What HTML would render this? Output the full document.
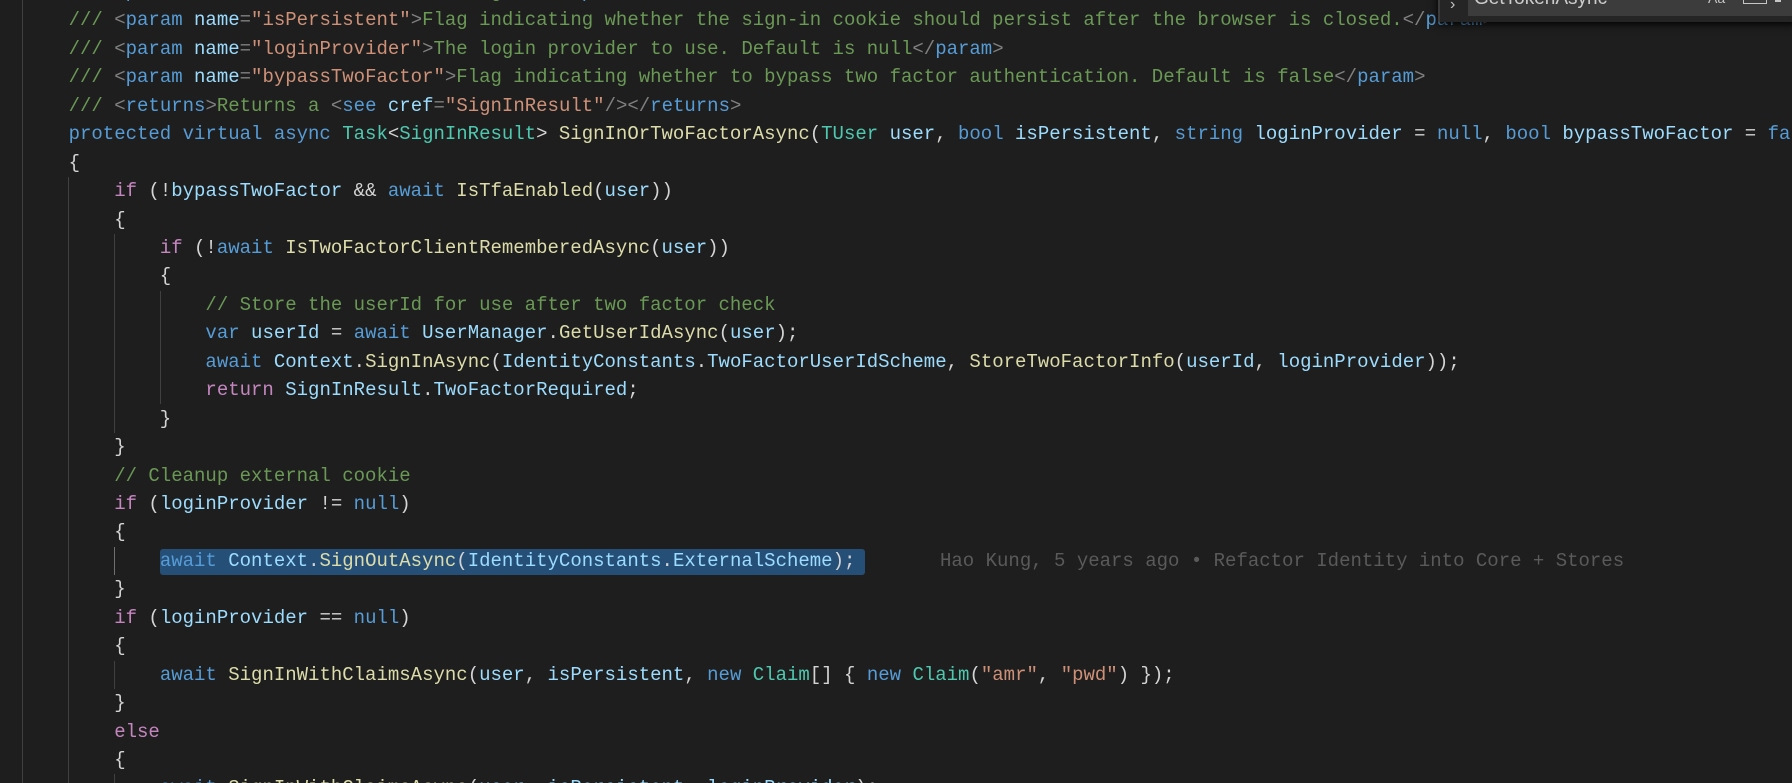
<!DOCTYPE html>
<html><head><meta charset="utf-8"><style>
html,body{margin:0;padding:0;background:#1e1e1e;width:1792px;height:783px;overflow:hidden;position:relative}
.l{position:absolute;left:68.6px;height:28.44px;line-height:28.44px;font-family:"Liberation Mono",monospace;font-size:19px;color:#d4d4d4;white-space:pre}
.c{color:#6a9955}.t{color:#808080}.k{color:#569cd6}.p{color:#c586c0}.y{color:#4ec9b0}.m{color:#dcdcaa}.v{color:#9cdcfe}.s{color:#ce9178}
.g{position:absolute;width:1px;background:#404040}
.sel{position:absolute;left:160px;top:549px;width:705px;height:26px;background:#264f78;border-radius:3px}
.bl{position:absolute;left:940px;font-family:"Liberation Mono",monospace;font-size:19px;color:#5a5a5a;white-space:pre;line-height:28.44px;height:28.44px}
</style></head><body>
<div class="g" style="left:22px;top:0;height:783px"></div>
<div class="g" style="left:68px;top:177px;height:606px"></div>
<div class="g" style="left:114px;top:234px;height:199px"></div>
<div class="g" style="left:160px;top:291px;height:113px"></div>
<div class="g" style="left:114px;top:547px;height:28px;background:#707070"></div>
<div class="g" style="left:114px;top:661px;height:28px"></div>
<div class="g" style="left:114px;top:774px;height:28px"></div>
<div class="sel"></div>
<div class="l" style="top:-22px"><span class="c">/// </span><span class="t">&lt;</span><span class="k">param</span> <span class="v">name</span><span class="t">=</span><span class="s">"user"</span><span class="t">&gt;</span><span class="c">The user to sign in.</span><span class="t">&lt;/</span><span class="k">param</span><span class="t">&gt;</span></div>
<div class="l" style="top:6.4px"><span class="c">/// </span><span class="t">&lt;</span><span class="k">param</span> <span class="v">name</span><span class="t">=</span><span class="s">"isPersistent"</span><span class="t">&gt;</span><span class="c">Flag indicating whether the sign-in cookie should persist after the browser is closed.</span><span class="t">&lt;/</span><span class="k">param</span><span class="t">&gt;</span></div>
<div class="l" style="top:34.8px"><span class="c">/// </span><span class="t">&lt;</span><span class="k">param</span> <span class="v">name</span><span class="t">=</span><span class="s">"loginProvider"</span><span class="t">&gt;</span><span class="c">The login provider to use. Default is null</span><span class="t">&lt;/</span><span class="k">param</span><span class="t">&gt;</span></div>
<div class="l" style="top:63.3px"><span class="c">/// </span><span class="t">&lt;</span><span class="k">param</span> <span class="v">name</span><span class="t">=</span><span class="s">"bypassTwoFactor"</span><span class="t">&gt;</span><span class="c">Flag indicating whether to bypass two factor authentication. Default is false</span><span class="t">&lt;/</span><span class="k">param</span><span class="t">&gt;</span></div>
<div class="l" style="top:91.7px"><span class="c">/// </span><span class="t">&lt;</span><span class="k">returns</span><span class="t">&gt;</span><span class="c">Returns a </span><span class="t">&lt;</span><span class="k">see</span> <span class="v">cref</span><span class="t">=</span><span class="s">"SignInResult"</span><span class="t">/&gt;&lt;/</span><span class="k">returns</span><span class="t">&gt;</span></div>
<div class="l" style="top:120.2px"><span class="k">protected virtual async</span> <span class="y">Task</span>&lt;<span class="y">SignInResult</span>&gt; <span class="m">SignInOrTwoFactorAsync</span>(<span class="y">TUser</span> <span class="v">user</span>, <span class="k">bool</span> <span class="v">isPersistent</span>, <span class="k">string</span> <span class="v">loginProvider</span> = <span class="k">null</span>, <span class="k">bool</span> <span class="v">bypassTwoFactor</span> = <span class="k">false</span>)</div>
<div class="l" style="top:148.6px">{</div>
<div class="l" style="top:177px">    <span class="p">if</span> (!<span class="v">bypassTwoFactor</span> &amp;&amp; <span class="k">await</span> <span class="m">IsTfaEnabled</span>(<span class="v">user</span>))</div>
<div class="l" style="top:205.5px">    {</div>
<div class="l" style="top:234px">        <span class="p">if</span> (!<span class="k">await</span> <span class="m">IsTwoFactorClientRememberedAsync</span>(<span class="v">user</span>))</div>
<div class="l" style="top:262.4px">        {</div>
<div class="l" style="top:290.8px">            <span class="c">// Store the userId for use after two factor check</span></div>
<div class="l" style="top:319.3px">            <span class="k">var</span> <span class="v">userId</span> = <span class="k">await</span> <span class="v">UserManager</span>.<span class="m">GetUserIdAsync</span>(<span class="v">user</span>);</div>
<div class="l" style="top:347.7px">            <span class="k">await</span> <span class="v">Context</span>.<span class="m">SignInAsync</span>(<span class="v">IdentityConstants</span>.<span class="v">TwoFactorUserIdScheme</span>, <span class="m">StoreTwoFactorInfo</span>(<span class="v">userId</span>, <span class="v">loginProvider</span>));</div>
<div class="l" style="top:376.2px">            <span class="p">return</span> <span class="v">SignInResult</span>.<span class="v">TwoFactorRequired</span>;</div>
<div class="l" style="top:404.6px">        }</div>
<div class="l" style="top:433px">    }</div>
<div class="l" style="top:461.5px">    <span class="c">// Cleanup external cookie</span></div>
<div class="l" style="top:490px">    <span class="p">if</span> (<span class="v">loginProvider</span> != <span class="k">null</span>)</div>
<div class="l" style="top:518.4px">    {</div>
<div class="l" style="top:546.8px">        <span class="k">await</span> <span class="v">Context</span>.<span class="m">SignOutAsync</span>(<span class="v">IdentityConstants</span>.<span class="v">ExternalScheme</span>);</div>
<div class="bl" style="top:546.8px">Hao Kung, 5 years ago • Refactor Identity into Core + Stores</div>
<div class="l" style="top:575.3px">    }</div>
<div class="l" style="top:603.7px">    <span class="p">if</span> (<span class="v">loginProvider</span> == <span class="k">null</span>)</div>
<div class="l" style="top:632.2px">    {</div>
<div class="l" style="top:660.6px">        <span class="k">await</span> <span class="m">SignInWithClaimsAsync</span>(<span class="v">user</span>, <span class="v">isPersistent</span>, <span class="k">new</span> <span class="y">Claim</span>[] { <span class="k">new</span> <span class="y">Claim</span>(<span class="s">"amr"</span>, <span class="s">"pwd"</span>) });</div>
<div class="l" style="top:689px">    }</div>
<div class="l" style="top:717.5px">    <span class="p">else</span></div>
<div class="l" style="top:745.9px">    {</div>
<div class="l" style="top:774.4px">        <span class="k">await</span> <span class="m">SignInWithClaimsAsync</span>(<span class="v">user</span>, <span class="v">isPersistent</span>, <span class="v">loginProvider</span>);</div>
<div style="position:absolute;left:1438px;top:-18px;width:360px;height:40px;background:#252526;box-shadow:0 2px 8px #000">
 <div style="position:absolute;left:0;top:0;width:2px;height:40px;background:#3c3c3c"></div>
 <div style="position:absolute;left:12px;top:14px;color:#c5c5c5;font:16px 'Liberation Sans',sans-serif">›</div>
 <div style="position:absolute;left:30px;top:4px;width:340px;height:30px;background:#3c3c3c"></div>
 <div style="position:absolute;left:36px;top:6px;color:#cccccc;font:19px 'Liberation Sans',sans-serif;white-space:pre">GetTokenAsync</div>
 <div style="position:absolute;left:270px;top:8px;color:#c5c5c5;font:14px 'Liberation Sans',sans-serif">Aa</div>
 <div style="position:absolute;left:305px;top:6px;width:22px;height:14px;border:1px solid #c5c5c5;color:#c5c5c5;font:11px 'Liberation Sans',sans-serif;text-align:center;line-height:14px">ab</div>
 <div style="position:absolute;left:337px;top:12px;width:6px;height:8px;background:#c5c5c5"></div>
</div>
</body></html>
